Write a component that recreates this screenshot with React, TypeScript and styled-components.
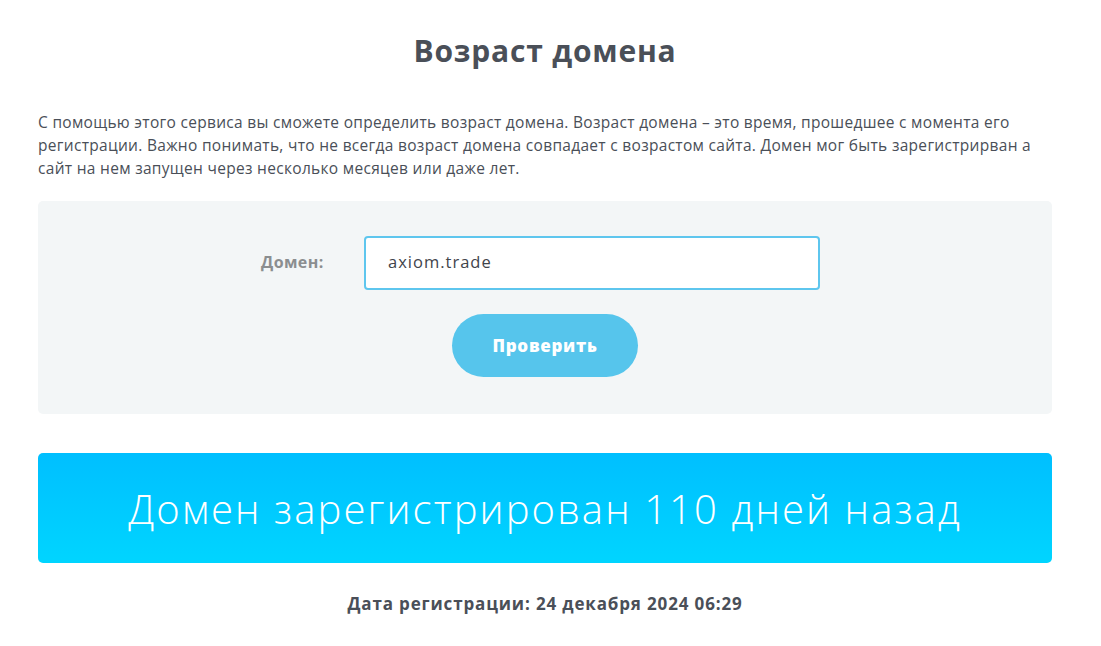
import styled, { createGlobalStyle } from 'styled-components';
import React, { useState } from 'react';

const GlobalStyle = createGlobalStyle`
  html, body {
    margin: 0;
    padding: 0;
    background: #ffffff;
  }
  body {
    font-family: 'Open Sans', sans-serif;
    color: #4a4f58;
  }
`;

const Page = styled.div`
  width: 1014px;
  padding: 0 49px 0 38px;
  display: flex;
  flex-direction: column;
`;

const Title = styled.h1`
  margin: 31px 0 0;
  text-align: center;
  font-family: 'Open Sans', sans-serif;
  font-weight: 700;
  font-size: 30px;
  letter-spacing: 0.8px;
  line-height: 40px;
  color: #4a4f58;
`;

const Intro = styled.p`
  margin: 40px 0 0;
  font-family: 'Open Sans', sans-serif;
  font-size: 15.5px;
  letter-spacing: 0.3px;
  line-height: 23px;
  color: #4a4f58;
`;

const Panel = styled.div`
  margin-top: 21px;
  background: #f3f6f7;
  border-radius: 5px;
  padding: 35px 0 37px;
  display: flex;
  flex-direction: column;
  align-items: center;
  gap: 24px;
`;

const Row = styled.div`
  align-self: flex-start;
  display: flex;
  align-items: center;
  padding-left: 223px;
`;

const Label = styled.label`
  width: 103px;
  font-family: 'Open Sans', sans-serif;
  font-weight: 700;
  font-size: 16px;
  letter-spacing: 0.4px;
  color: #8b8e90;
  margin-top: -3px;
`;

const Input = styled.input`
  box-sizing: border-box;
  width: 456px;
  height: 54px;
  border: 2px solid #5ec6ee;
  border-radius: 4px;
  padding: 0 22px 3px;
  font-family: 'Open Sans', sans-serif;
  font-size: 16.5px;
  letter-spacing: 1px;
  color: #3f444b;
  background: #fff;
  outline: none;
`;

const Button = styled.button`
  width: 186px;
  height: 63px;
  border: 0;
  border-radius: 32px;
  background: #56c5ec;
  color: #ffffff;
  font-family: 'Open Sans', sans-serif;
  font-weight: 800;
  font-size: 17px;
  letter-spacing: 0.7px;
  cursor: pointer;
`;

const Result = styled.div`
  margin-top: 39px;
  height: 110px;
  border-radius: 5px;
  background: linear-gradient(180deg, #00bfff 0%, #00d5ff 100%);
  display: flex;
  align-items: center;
  justify-content: center;
  font-family: 'Open Sans', sans-serif;
  font-weight: 300;
  font-size: 40px;
  letter-spacing: 2.1px;
  color: #ffffff;
`;

const DateLine = styled.div`
  margin-top: 29px;
  text-align: center;
  font-family: 'Open Sans', sans-serif;
  font-weight: 700;
  font-size: 17px;
  letter-spacing: 0.85px;
  color: #4a4f58;
`;

export default function App() {
  const [domain, setDomain] = useState('axiom.trade');
  return (
    <>
      <GlobalStyle />
      <Page>
        <Title>Возраст домена</Title>
        <Intro>
          С помощью этого сервиса вы сможете определить возраст домена. Возраст домена – это время,
          прошедшее с момента его регистрации. Важно понимать, что не всегда возраст домена совпадает
          с возрастом сайта. Домен мог быть зарегистрирван а сайт на нем запущен через несколько
          месяцев или даже лет.
        </Intro>
        <Panel>
          <Row>
            <Label htmlFor="domain">Домен:</Label>
            <Input
              id="domain"
              value={domain}
              onChange={(e: React.ChangeEvent<HTMLInputElement>) => setDomain(e.target.value)}
            />
          </Row>
          <Button>Проверить</Button>
        </Panel>
        <Result>Домен зарегистрирован 110 дней назад</Result>
        <DateLine>Дата регистрации: 24 декабря 2024 06:29</DateLine>
      </Page>
    </>
  );
}
